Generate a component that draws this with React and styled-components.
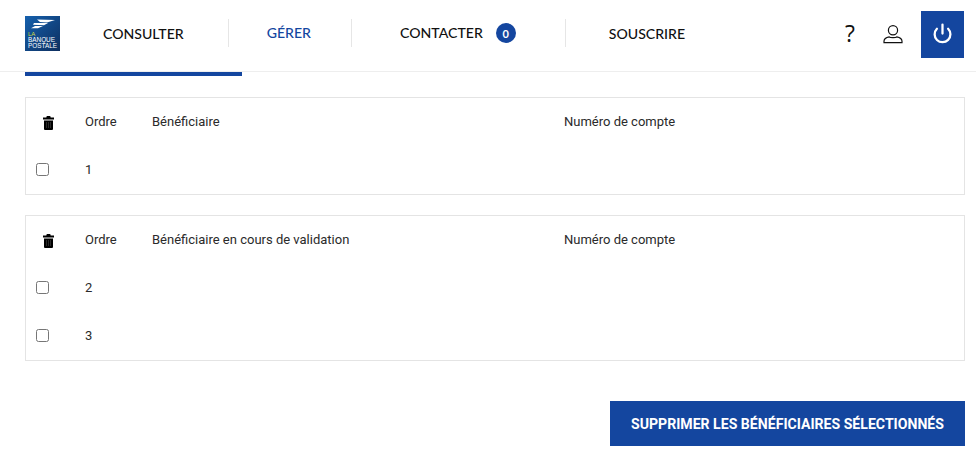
import styled, { createGlobalStyle } from "styled-components";
import { Power } from "lucide-react";

const blue = "#14469f";

const Global = createGlobalStyle`
  html, body {
    margin: 0;
    padding: 0;
    background: #fff;
    overflow: hidden;
  }
`;

const Header = styled.header`
  display: flex;
  align-items: flex-start;
  height: 60px;
  padding: 11px 12px 0 25px;
  border-bottom: 1px solid #eeeeee;
  font-family: Lato, sans-serif;
`;

const LogoBox = styled.svg`
  display: block;
  width: 35px;
  height: 35px;
  margin-top: 5px;
  flex: none;
`;

const Nav = styled.nav`
  display: flex;
  align-items: center;
  height: 28px;
  margin-top: 8px;
`;

const NavItem = styled.a`
  display: flex;
  align-items: center;
  gap: 13px;
  height: 100%;
  padding: 0 ${(p) => p.$right}px 0 ${(p) => p.$left}px;
  border-left: ${(p) => (p.$first ? "none" : "1px solid #e6e6e6")};
  color: ${(p) => (p.$active ? blue : "#111")};
  font-size: 14.1px;
  font-weight: 500;
  line-height: 1;
`;

const NavLabel = styled.span`
  margin-top: ${(p) => (p.$low ? "2px" : "0")};
`;

const Badge = styled.span`
  display: inline-flex;
  align-items: center;
  justify-content: center;
  width: 20px;
  height: 20px;
  border-radius: 50%;
  background: ${blue};
  color: #fff;
  font-size: 11px;
  font-weight: 700;
`;

const Tools = styled.div`
  display: flex;
  align-items: center;
  margin-left: auto;
`;

const Help = styled.span`
  width: 20px;
  text-align: center;
  color: #111;
  font-family: "Open Sans", sans-serif;
  font-size: 23px;
  font-weight: 400;
  line-height: 1;
  margin-right: 23px;
  margin-top: -3px;
`;

const UserIcon = styled.svg`
  display: block;
  width: 20px;
  height: 20px;
  margin-right: 18px;
  margin-top: -1px;
`;

const PowerButton = styled.button`
  display: flex;
  align-items: center;
  justify-content: center;
  width: 43px;
  height: 47px;
  padding: 0 0 3px;
  border: 0;
  background: ${blue};
  color: #fff;
`;

const Main = styled.main`
  padding: 0 11px 0 25px;
  font-family: Roboto, sans-serif;
  font-size: 13px;
  color: #2a2a2a;
`;

const ProgressBar = styled.div`
  width: 217px;
  height: 4px;
  background: ${blue};
`;

const Panel = styled.section`
  border: 1px solid #e4e4e4;
  margin-top: ${(p) => p.$top}px;
`;

const Row = styled.div`
  display: grid;
  grid-template-columns: 59px 67px 412px 1fr;
  align-items: center;
  height: 48px;
`;

const Cell = styled.div`
  margin-top: ${(p) => (p.$head ? "-2px" : "-1px")};
`;

const IconCell = styled.div`
  display: flex;
  padding-left: ${(p) => p.$pad}px;
  margin-top: ${(p) => (p.$head ? "2px" : "-1px")};
`;

const TrashIcon = styled.svg`
  display: block;
  width: 11px;
  height: 14px;
`;

const Check = styled.span`
  display: block;
  width: 11px;
  height: 11px;
  border: 1px solid #767676;
  border-radius: 2.5px;
  background: #fff;
`;

const Actions = styled.div`
  display: flex;
  justify-content: flex-end;
  margin-top: 40px;
`;

const DeleteButton = styled.button`
  width: 355px;
  height: 45px;
  padding: 0;
  border: 0;
  background: ${blue};
  color: #fff;
  font-family: Roboto, sans-serif;
  font-size: 14.1px;
  font-weight: 700;
  white-space: nowrap;
`;

const Logo = () => (
  <LogoBox viewBox="0 0 35 35">
    <defs>
      <linearGradient id="lbp" x1="0" y1="0" x2="1" y2="1">
        <stop offset="0" stopColor="#1560ad" />
        <stop offset="1" stopColor="#0e2f5f" />
      </linearGradient>
    </defs>
    <rect width="35" height="35" fill="url(#lbp)" />
    <path d="M12 3.500 L30 4 L22 6.500 L15 6 Z M9 7 L23 7 L19 9.300 L8 8.800 Z M6 12.200 L10 10 L18 10 L13 12.200 Z" fill="#fff" />
    <text x="3" y="19.500" fontFamily="Liberation Sans" fontSize="6" fill="#d7df3f">LA</text>
    <text x="3" y="25.500" fontFamily="Liberation Sans" fontSize="6.400" fill="#fff">BANQUE</text>
    <text x="3" y="32" fontFamily="Liberation Sans" fontSize="6.400" fill="#fff">POSTALE</text>
  </LogoBox>
);

const Trash = () => (
  <TrashIcon viewBox="0 0 11 14">
    <path d="M3.800 0h3.400l.5 1.400H11v2H0v-2h3.300z M1 4.400h9V13a1 1 0 0 1-1 1H2a1 1 0 0 1-1-1z" fill="#000" />
    <path d="M3.500 6v6M5.500 6v6M7.500 6v6" stroke="#555" strokeWidth=".5" />
  </TrashIcon>
);

const tables = [
  {
    title: "Bénéficiaire",
    top: 21,
    rows: ["1"],
  },
  {
    title: "Bénéficiaire en cours de validation",
    top: 20,
    rows: ["2", "3"],
  },
];

export default function App() {
  return (
    <>
      <Global />
      <Header>
        <Logo />
        <Nav>
          <NavItem $first $left={43} $right={44}>
            <NavLabel $low>CONSULTER</NavLabel>
          </NavItem>
          <NavItem $active $left={38} $right={40}>
            <NavLabel>GÉRER</NavLabel>
          </NavItem>
          <NavItem $left={48} $right={49}>
            <NavLabel>CONTACTER</NavLabel>
            <Badge>0</Badge>
          </NavItem>
          <NavItem $left={43} $right={44}>
            <NavLabel $low>SOUSCRIRE</NavLabel>
          </NavItem>
        </Nav>
        <Tools>
          <Help>?</Help>
          <UserIcon viewBox="0 0 20 20" fill="none" stroke="#111" strokeWidth="1.200">
            <circle cx="10" cy="6.200" r="4.600" />
            <path d="M1 18.600v-1.400c0-2.600 3-4 5.200-4.400 1 1 6.600 1 7.600 0 2.200.4 5.200 1.800 5.200 4.400v1.400z" />
          </UserIcon>
          <PowerButton>
            <Power size={21} strokeWidth={2.6} />
          </PowerButton>
        </Tools>
      </Header>
      <Main>
        <ProgressBar />
        {tables.map((table) => (
          <Panel key={table.title} $top={table.top}>
            <Row>
              <IconCell $head $pad={17}><Trash /></IconCell>
              <Cell $head>Ordre</Cell>
              <Cell $head>{table.title}</Cell>
              <Cell $head>Numéro de compte</Cell>
            </Row>
            {table.rows.map((n) => (
              <Row key={n}>
                <IconCell $pad={10}><Check /></IconCell>
                <Cell>{n}</Cell>
              </Row>
            ))}
          </Panel>
        ))}
        <Actions>
          <DeleteButton>SUPPRIMER LES BÉNÉFICIAIRES SÉLECTIONNÉS</DeleteButton>
        </Actions>
      </Main>
    </>
  );
}
